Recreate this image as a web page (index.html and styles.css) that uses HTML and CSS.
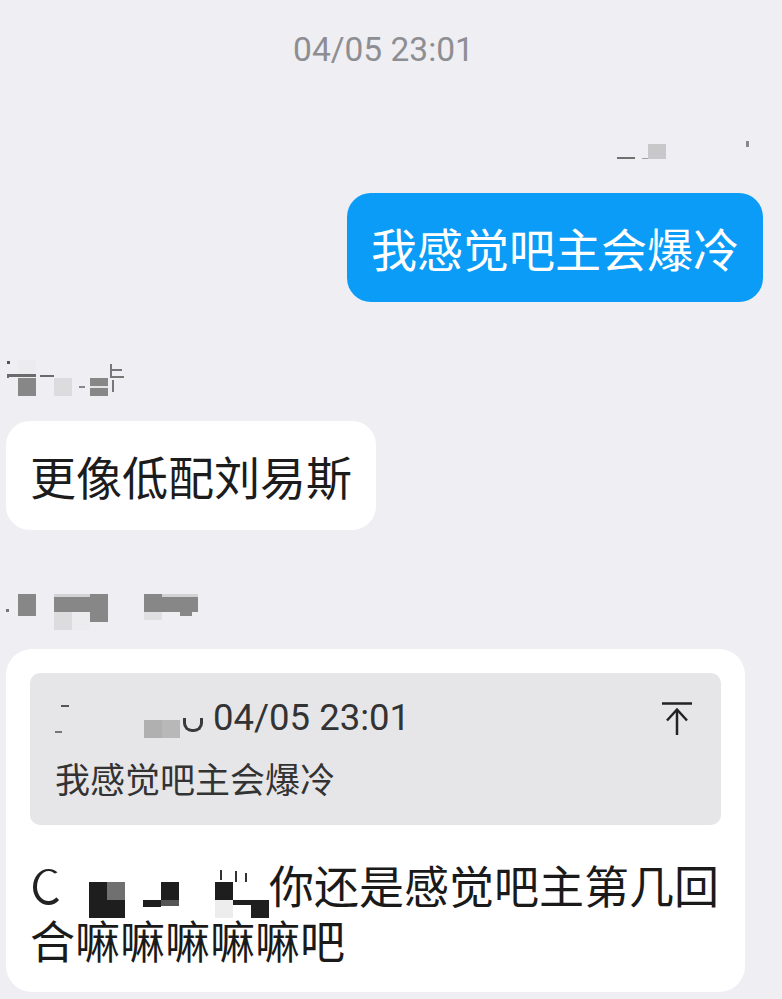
FILE: index.html
```html
<!DOCTYPE html>
<html lang="zh-CN">
<head>
    <meta charset="UTF-8">
    <meta name="viewport" content="width=device-width, initial-scale=1.0">
    <title>聊天记录</title>
    <link rel="stylesheet" href="styles.css">
</head>
<body>
    <div class="chat">
        <div class="time">04/05 23:01</div>

        <div class="msg mine">
            <div class="nick-right">
                <i class="n-line"></i><i class="n-dash"></i><i class="n-box"></i><i class="n-tick"></i>
            </div>
            <div class="bubble blue">我感觉吧主会爆冷</div>
        </div>

        <div class="msg first">
            <div class="mosaic nick">
                <div class="row"><i class="hl"></i><i class="hlx"></i><i class="hl2"></i><i></i><i></i><i></i><i class="hk"></i></div>
                <div class="row"><i></i><i class="d"></i><i></i><i class="l"></i><i class="sm"></i><i class="s"></i><i class="hk2"></i></div>
            </div>
            <div class="bubble white">更像低配刘易斯</div>
        </div>

        <div class="msg second">
            <div class="mosaic nick">
                <div class="row"><i class="pt"></i><i class="d"></i><i></i><i class="t"></i><i class="t"></i><i class="d"></i><i></i><i></i><i class="d"></i><i class="t"></i><i class="t"></i></div>
                <div class="row"><i></i><i class="dh"></i><i></i><i class="l"></i><i class="x"></i><i class="dm"></i><i></i><i></i><i class="lh"></i><i></i><i class="dq"></i></div>
            </div>
            <div class="bubble white reply">
                <div class="quote">
                    <div class="quote-head">
                        <span class="q-who"><i class="q-mark"></i><i class="q-box"></i><i class="q-hook"></i></span>
                        <span class="q-date">04/05 23:01</span>
                        <svg class="q-top" viewBox="0 0 30 33" fill="none" stroke="#222" stroke-width="2.5">
                            <path d="M0 1.5H30"/>
                            <path d="M5 18.5L15 7.5L25 18.5"/>
                            <path d="M15 8V33"/>
                        </svg>
                    </div>
                    <div class="quote-text">我感觉吧主会爆冷</div>
                </div>
                <div class="reply-text"><span class="at"><i class="at-c"></i><span class="mosaic">
                    <span class="row tiny"><i></i><i></i><i></i><i></i><i></i><i></i><i></i><i class="mk"></i><i class="mk2"></i><i></i></span>
                    <span class="row"><i class="k"></i><i class="m"></i><i></i><i></i><i class="k"></i><i></i><i></i><i class="k"></i><i></i><i></i></span>
                    <span class="row"><i class="k"></i><i class="k"></i><i></i><i class="kh"></i><i class="gh"></i><i></i><i></i><i class="e"></i><i class="kt"></i><i class="k"></i></span>
                </span></span>你还是感觉吧主第几回合嘛嘛嘛嘛嘛吧</div>
            </div>
        </div>
    </div>
</body>
</html>
```

FILE: styles.css
```css
* {
    margin: 0;
    padding: 0;
    box-sizing: border-box;
}

body {
    font-family: Roboto, "Noto Sans CJK SC", sans-serif;
    background-color: #efeff3;
    color: #1a1a1a;
}

.chat {
    display: flex;
    flex-direction: column;
    padding-bottom: 7px;
}

.time {
    padding: 30px 15px 0 0;
    text-align: center;
    font-size: 33.5px;
    line-height: 40px;
    color: #8e8e92;
}

/* message groups */
.msg {
    display: flex;
    flex-direction: column;
    align-items: flex-start;
}

.msg.mine {
    align-items: flex-end;
    margin-top: 71px;
    padding-right: 19px;
}

.msg.first {
    margin-top: 58px;
}

.msg.second {
    margin-top: 64px;
}

/* blurred nicknames */
.nick-right {
    display: flex;
    align-items: flex-end;
    height: 21px;
    margin: 0 14px 31px 0;
}

.nick-right i {
    display: block;
}

.n-line {
    width: 18px;
    height: 2px;
    margin-bottom: 3px;
    background: #707070;
}

.n-dash {
    width: 6px;
    height: 1px;
    margin: 0 0 3px 7px;
    background: #a0a0a0;
}

.n-box {
    width: 18px;
    height: 15px;
    margin-bottom: 3px;
    background: #c8c8ca;
}

.n-tick {
    align-self: flex-start;
    width: 3px;
    height: 6px;
    margin-left: 80px;
    background: #888;
}

.nick {
    margin-bottom: 25px;
}

.msg.second .nick {
    margin-bottom: 19px;
}

.mosaic {
    display: flex;
    flex-direction: column;
}

.mosaic .row {
    display: flex;
}

.mosaic i {
    display: block;
    flex: none;
    width: 18px;
    height: 18px;
}

.mosaic .tiny i {
    height: 15px;
}

.d { background: #878787; }
.l { background: #dcdcde; }
.x { background: #ececee; }
.k { background: #1e1e1e; }
.m { background: #707070; }
.e { background: #ededed; }
.s { background: linear-gradient(#878787 0 8px, #e4e4e6 8px 10px, #878787 10px); }
.t { background: linear-gradient(#d2d2d4 0 3px, #878787 3px); }
.dh { background: linear-gradient(#878787 0 4px, transparent 4px); }
.dm { background: linear-gradient(#878787 0 10px, transparent 10px); }
.lh { background: linear-gradient(#e0e0e2 0 8px, transparent 8px); }
.dq { background: linear-gradient(#888 0 4px, transparent 4px) 0 0 / 12px 18px no-repeat; }
.kh { background: linear-gradient(#1e1e1e 0 7px, transparent 7px); }
.gh { background: linear-gradient(#555 0 6px, transparent 6px); }
.kt { background: linear-gradient(#1e1e1e 0 5px, transparent 5px); }
.pt { background: linear-gradient(#777, #777) 6px 15px / 3px 3px no-repeat; }
.sm { background: linear-gradient(#888, #888) 7px 8px / 6px 2px no-repeat; }

.hl {
    background: linear-gradient(#6b6b6b, #6b6b6b) 8px 14px / 10px 3px no-repeat,
                linear-gradient(#6b6b6b, #6b6b6b) 7px 14px / 2px 10px no-repeat,
                linear-gradient(#555, #555) 7px 1px / 3px 3px no-repeat;
}

.hlx {
    background: linear-gradient(#6b6b6b, #6b6b6b) 0 14px / 18px 3px no-repeat, #ececee;
}

.hl2 {
    background: linear-gradient(#6b6b6b, #6b6b6b) 4px 15px / 14px 2px no-repeat;
}

.hk {
    background: linear-gradient(#777, #777) 2px 4px / 2px 14px no-repeat,
                linear-gradient(#777, #777) 2px 9px / 12px 2px no-repeat,
                linear-gradient(#777, #777) 2px 16px / 14px 2px no-repeat;
}

.hk2 {
    background: linear-gradient(#777, #777) 4px 2px / 2px 12px no-repeat;
}

.mk {
    background: linear-gradient(#333, #333) 5px 3px / 2px 10px no-repeat;
}

.mk2 {
    background: linear-gradient(#333, #333) 2px 4px / 2px 11px no-repeat,
                linear-gradient(#333, #333) 12px 6px / 2px 9px no-repeat;
}

/* bubbles */
.bubble {
    margin-left: 6px;
    font-family: "Noto Sans CJK SC", sans-serif;
    font-size: 46px;
    line-height: 55px;
    border-radius: 24px;
}

.bubble.blue {
    margin-left: 0;
    padding: 27px 24px;
    background: #0a9cf6;
    color: #fff;
}

.bubble.white {
    padding: 27px 24px;
    background: #fff;
    color: #1c1c1c;
}

.bubble.reply {
    width: 739px;
    padding: 24px 24px 25px;
    font-size: 45px;
    border-radius: 26px;
}

.quote {
    padding: 23px 29px 25px 25px;
    background: #e6e6e8;
    border-radius: 10px;
}

.quote-head {
    display: flex;
    align-items: center;
    height: 44px;
    font-family: Roboto, "Noto Sans CJK SC", sans-serif;
    font-size: 36.5px;
    line-height: 44px;
    color: #333;
}

.q-who {
    display: flex;
    align-items: flex-end;
    align-self: stretch;
    padding-bottom: 2px;
    margin-right: 10px;
}

.q-who i {
    display: block;
}

.q-mark {
    width: 15px;
    height: 28px;
    margin-bottom: 5px;
    background: linear-gradient(#555, #555) 6px 0 / 8px 2px no-repeat,
                linear-gradient(#777, #777) 0 26px / 7px 2px no-repeat;
}

.q-box {
    width: 36px;
    height: 18px;
    margin-left: 74px;
    background: linear-gradient(90deg, #b0b0b0 0 18px, #b8b8b8 18px);
}

.q-hook {
    width: 20px;
    height: 14px;
    margin: 0 0 6px 3px;
    border: 3px solid #3a3a3a;
    border-top: 0;
    border-radius: 0 0 9px 9px;
}

.q-top {
    margin-left: auto;
    width: 30px;
    height: 33px;
}

.quote-text {
    margin-top: 16px;
    font-size: 35px;
    line-height: 44px;
    color: #333;
}

.reply-text {
    margin-top: 32px;
    font-size: 45px;
    line-height: 55px;
    color: #1a1a1a;
}

.at {
    display: inline-flex;
    vertical-align: top;
    width: 239px;
    height: 55px;
    padding-top: 10px;
}

.at-c {
    display: block;
    flex: none;
    width: 31px;
    height: 36px;
    margin: 2px 25px 0 3px;
    border: 4px solid #222;
    border-right-color: transparent;
    border-top-width: 2px;
    border-radius: 50%;
}
```
